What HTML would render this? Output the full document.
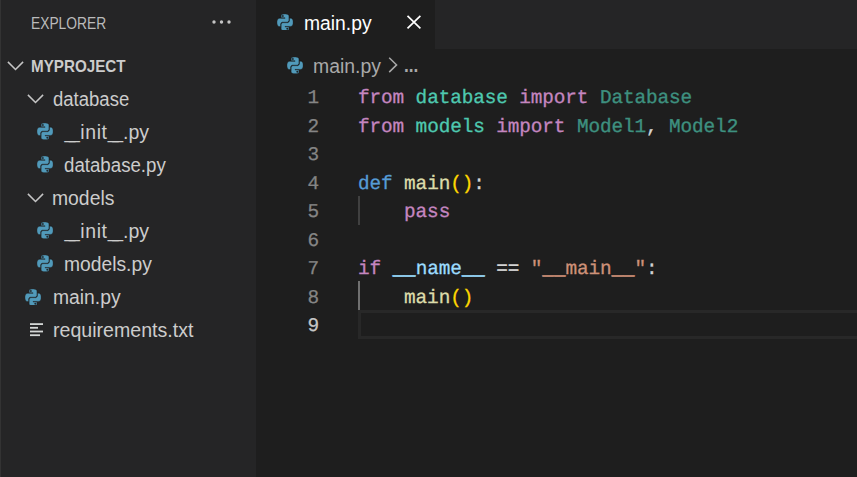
<!DOCTYPE html>
<html lang="en">
<head>
<meta charset="utf-8">
<title>main.py - myproject</title>
<style>
*{margin:0;padding:0;box-sizing:border-box}
html,body{width:857px;height:477px;overflow:hidden;background:#1e1e1e}
body{position:relative;font-family:"Liberation Sans",sans-serif;color:#cccccc}
.abs{position:absolute}
#side{left:0;top:0;width:256px;height:477px;background:#252526}
#edge{left:0;top:0;width:1px;height:477px;background:#333333}
#tabs{left:256px;top:0;width:601px;height:49px;background:#252526}
#tab{left:256px;top:0;width:179px;height:49px;background:#1e1e1e}
.t{position:absolute;height:33px;line-height:33px;white-space:nowrap;transform-origin:0 50%}
.u1{letter-spacing:-6.3px;position:relative;top:-1.2px}.u2{letter-spacing:-0.5px;position:relative;top:-1.2px}
.ln{position:absolute;left:255px;width:64px;text-align:right;height:28.5px;line-height:28.5px;font-family:"Liberation Mono",monospace;font-size:19.4px;letter-spacing:-0.12px;color:#858585;-webkit-text-stroke:0.25px;text-rendering:geometricPrecision}
.cl{position:absolute;left:358px;height:28.5px;line-height:28.5px;font-family:"Liberation Mono",monospace;font-size:19.4px;letter-spacing:-0.12px;color:#d4d4d4;white-space:pre;-webkit-text-stroke:0.3px;text-rendering:geometricPrecision}
.ub{text-shadow:0 0.8px 0 currentColor}.k{color:#c586c0}.d{color:#569cd6}.m{color:#4ec9b0}.u{color:#4ec9b0;opacity:.67}.f{color:#dcdcaa}.b{color:#ffd700}.v{color:#9cdcfe}.s{color:#ce9178}
</style>
</head>
<body>
<svg width="0" height="0" style="position:absolute">
<defs>
<symbol id="py" viewBox="0 0 24 24"><path fill="#519aba" stroke="#252526" stroke-width="0.6" d="M14.25.18l.9.2.73.26.59.3.45.32.34.34.25.34.16.33.1.3.04.26.02.2-.01.13V8.5l-.05.63-.13.55-.21.46-.26.38-.3.31-.33.25-.35.19-.35.14-.33.1-.3.07-.26.04-.21.02H8.77l-.69.05-.59.14-.5.22-.41.27-.33.32-.27.35-.2.36-.15.37-.1.35-.07.32-.04.27-.02.21v3.06H3.17l-.21-.03-.28-.07-.32-.12-.35-.18-.36-.26-.36-.36-.35-.46-.32-.59-.28-.73-.21-.88-.14-1.05-.05-1.23.06-1.22.16-1.04.24-.87.32-.71.36-.57.4-.44.42-.33.42-.24.4-.16.36-.1.32-.05.24-.01h.16l.06.01h8.16v-.83H6.18l-.01-2.75-.02-.37.05-.34.11-.31.17-.28.25-.26.31-.23.38-.2.44-.18.51-.15.58-.12.64-.1.71-.06.77-.04.84-.02 1.27.05zm-6.3 1.98l-.23.33-.08.41.08.41.23.34.33.22.41.09.41-.09.33-.22.23-.34.08-.41-.08-.41-.23-.33-.33-.22-.41-.09-.41.09zm13.09 3.95l.28.06.32.12.35.18.36.27.36.35.35.47.32.59.28.73.21.88.14 1.04.05 1.23-.06 1.23-.16 1.04-.24.86-.32.71-.36.57-.4.45-.42.33-.42.24-.4.16-.36.09-.32.05-.24.02-.16-.01h-8.22v.82h5.84l.01 2.76.02.36-.05.34-.11.31-.17.29-.25.25-.31.24-.38.2-.44.17-.51.15-.58.13-.64.09-.71.07-.77.04-.84.01-1.27-.04-1.07-.14-.9-.2-.73-.25-.59-.3-.45-.33-.34-.34-.25-.34-.16-.33-.1-.3-.04-.25-.02-.2.01-.13v-5.34l.05-.64.13-.54.21-.46.26-.38.3-.32.33-.24.35-.2.35-.14.33-.1.3-.06.26-.04.21-.02.13-.01h5.84l.69-.05.59-.14.5-.21.41-.28.33-.32.27-.35.2-.36.15-.36.1-.35.07-.32.04-.28.02-.21V6.07h2.09l.14.01zm-6.47 14.25l-.23.33-.08.41.08.41.23.33.33.23.41.08.41-.08.33-.23.23-.33.08-.41-.08-.41-.23-.33-.33-.23-.41-.08-.41.08z"/></symbol>
<symbol id="py2" viewBox="0 0 24 24"><path fill="#519aba" stroke="#1e1e1e" stroke-width="0.6" d="M14.25.18l.9.2.73.26.59.3.45.32.34.34.25.34.16.33.1.3.04.26.02.2-.01.13V8.5l-.05.63-.13.55-.21.46-.26.38-.3.31-.33.25-.35.19-.35.14-.33.1-.3.07-.26.04-.21.02H8.77l-.69.05-.59.14-.5.22-.41.27-.33.32-.27.35-.2.36-.15.37-.1.35-.07.32-.04.27-.02.21v3.06H3.17l-.21-.03-.28-.07-.32-.12-.35-.18-.36-.26-.36-.36-.35-.46-.32-.59-.28-.73-.21-.88-.14-1.05-.05-1.23.06-1.22.16-1.04.24-.87.32-.71.36-.57.4-.44.42-.33.42-.24.4-.16.36-.1.32-.05.24-.01h.16l.06.01h8.16v-.83H6.18l-.01-2.75-.02-.37.05-.34.11-.31.17-.28.25-.26.31-.23.38-.2.44-.18.51-.15.58-.12.64-.1.71-.06.77-.04.84-.02 1.27.05zm-6.3 1.98l-.23.33-.08.41.08.41.23.34.33.22.41.09.41-.09.33-.22.23-.34.08-.41-.08-.41-.23-.33-.33-.22-.41-.09-.41.09zm13.09 3.95l.28.06.32.12.35.18.36.27.36.35.35.47.32.59.28.73.21.88.14 1.04.05 1.23-.06 1.23-.16 1.04-.24.86-.32.71-.36.57-.4.45-.42.33-.42.24-.4.16-.36.09-.32.05-.24.02-.16-.01h-8.22v.82h5.84l.01 2.76.02.36-.05.34-.11.31-.17.29-.25.25-.31.24-.38.2-.44.17-.51.15-.58.13-.64.09-.71.07-.77.04-.84.01-1.27-.04-1.07-.14-.9-.2-.73-.25-.59-.3-.45-.33-.34-.34-.25-.34-.16-.33-.1-.3-.04-.25-.02-.2.01-.13v-5.34l.05-.64.13-.54.21-.46.26-.38.3-.32.33-.24.35-.2.35-.14.33-.1.3-.06.26-.04.21-.02.13-.01h5.84l.69-.05.59-.14.5-.21.41-.28.33-.32.27-.35.2-.36.15-.36.1-.35.07-.32.04-.28.02-.21V6.07h2.09l.14.01zm-6.47 14.25l-.23.33-.08.41.08.41.23.33.33.23.41.08.41-.08.33-.23.23-.33.08-.41-.08-.41-.23-.33-.33-.23-.41-.08-.41.08z"/></symbol>
</defs>
</svg>

<div id="side" class="abs"></div>
<div id="edge" class="abs"></div>
<div id="tabs" class="abs"></div>
<div id="tab" class="abs"></div>

<!-- sidebar title -->
<div class="t" id="explorer" style="left:30.9px;top:7px;font-size:16.5px;color:#bbbbbb;transform:scaleX(0.836);">EXPLORER</div>
<svg class="abs" style="left:211px;top:19px" width="22" height="6" viewBox="0 0 22 6"><circle cx="3" cy="3" r="1.7" fill="#c5c5c5"/><circle cx="10.5" cy="3" r="1.7" fill="#c5c5c5"/><circle cx="18" cy="3" r="1.7" fill="#c5c5c5"/></svg>

<!-- project header -->
<svg class="abs" style="left:7.2px;top:60.8px" width="17" height="10" viewBox="0 0 17 10"><path fill="none" stroke="#c5c5c5" stroke-width="1.5" d="M0.9 0.9 L8.5 8.5 L16.1 0.9"/></svg>
<div class="t" id="myproject" style="left:31.2px;top:50px;font-size:16.5px;color:#cccccc;font-weight:bold;transform:scaleX(0.921);">MYPROJECT</div>

<!-- tree -->
<svg class="abs" style="left:27.2px;top:94px" width="17" height="10" viewBox="0 0 17 10"><path fill="none" stroke="#c5c5c5" stroke-width="1.5" d="M0.9 0.9 L8.5 8.5 L16.1 0.9"/></svg>
<div class="t" id="database" style="left:53.2px;top:82.8px;font-size:19.5px;color:#cccccc;transform:scaleX(0.95);">database</div>
<svg class="abs" style="left:37.3px;top:123.3px" width="16.1" height="16.8" viewBox="0 0 24 24" preserveAspectRatio="none"><use href="#py"/></svg>
<div class="t" id="init1" style="left:64.4px;top:115.8px;font-size:19.5px;color:#cccccc;transform:scaleX(1);"><span class="u1">_</span><span class="u2">_</span><span style="letter-spacing:0.6px;margin-left:1px">init</span><span class="u1">_</span><span class="u2">_</span><span style="margin-left:0.5px">.py</span></div>
<svg class="abs" style="left:37.3px;top:156.3px" width="16.1" height="16.8" viewBox="0 0 24 24" preserveAspectRatio="none"><use href="#py"/></svg>
<div class="t" id="databasepy" style="left:64.3px;top:148.8px;font-size:19.5px;color:#cccccc;transform:scaleX(0.958);">database.py</div>
<svg class="abs" style="left:27.2px;top:193px" width="17" height="10" viewBox="0 0 17 10"><path fill="none" stroke="#c5c5c5" stroke-width="1.5" d="M0.9 0.9 L8.5 8.5 L16.1 0.9"/></svg>
<div class="t" id="models" style="left:52.3px;top:181.8px;font-size:19.5px;color:#cccccc;transform:scaleX(0.992);">models</div>
<svg class="abs" style="left:37.3px;top:222.3px" width="16.1" height="16.8" viewBox="0 0 24 24" preserveAspectRatio="none"><use href="#py"/></svg>
<div class="t" id="init2" style="left:64.4px;top:214.8px;font-size:19.5px;color:#cccccc;transform:scaleX(1);"><span class="u1">_</span><span class="u2">_</span><span style="letter-spacing:0.6px;margin-left:1px">init</span><span class="u1">_</span><span class="u2">_</span><span style="margin-left:0.5px">.py</span></div>
<svg class="abs" style="left:37.3px;top:255.3px" width="16.1" height="16.8" viewBox="0 0 24 24" preserveAspectRatio="none"><use href="#py"/></svg>
<div class="t" id="modelspy" style="left:64.3px;top:247.8px;font-size:19.5px;color:#cccccc;transform:scaleX(0.988);">models.py</div>
<svg class="abs" style="left:25.0px;top:288.5px" width="16.1" height="16.8" viewBox="0 0 24 24" preserveAspectRatio="none"><use href="#py"/></svg>
<div class="t" id="mainpy" style="left:52.6px;top:280.6px;font-size:19.5px;color:#cccccc;transform:scaleX(0.99);">main.py</div>
<svg class="abs" style="left:30px;top:323px" width="14" height="14" viewBox="0 0 14 14"><g fill="#d4d7d6"><rect x="0" y="0.2" width="13" height="1.8"/><rect x="0" y="3.9" width="8" height="1.8"/><rect x="0" y="7.6" width="13" height="1.8"/><rect x="0" y="11.3" width="10" height="1.8"/></g></svg>
<div class="t" id="req" style="left:52.6px;top:313.6px;font-size:19.5px;color:#cccccc;transform:scaleX(1.004);">requirements.txt</div>

<!-- tab -->
<svg class="abs" style="left:277.3px;top:13.6px" width="16.1" height="16.8" viewBox="0 0 24 24" preserveAspectRatio="none"><use href="#py2"/></svg>
<div class="t" id="tabmain" style="left:304.3px;top:7.1px;font-size:19.5px;color:#ffffff;transform:scaleX(0.99);">main.py</div>
<svg class="abs" style="left:404.6px;top:12.9px" width="18" height="18" viewBox="0 0 18 18"><path d="M2.5 2.8 L15.4 15.3 M15.4 2.8 L2.5 15.3" stroke="#ffffff" stroke-width="1.7" fill="none"/></svg>

<!-- breadcrumb -->
<svg class="abs" style="left:286.7px;top:57.4px" width="16.1" height="16.8" viewBox="0 0 24 24" preserveAspectRatio="none"><use href="#py2"/></svg>
<div class="t" id="bcmain" style="left:313.2px;top:49.7px;font-size:19.5px;color:#a9a9a9;transform:scaleX(0.995);">main.py</div>
<svg class="abs" style="left:384px;top:56px" width="18" height="18" viewBox="0 0 18 18"><path d="M5.2 1.7 L12.6 8.9 L5.2 16.1" stroke="#a9a9a9" stroke-width="1.5" fill="none"/></svg>
<div class="t" id="bcdots" style="left:404.2px;top:48.7px;font-size:19.5px;color:#a9a9a9;font-weight:bold;transform:scaleX(0.88);">...</div>

<!-- line numbers + code -->
<div class="abs" style="left:358px;top:195.75px;width:1.5px;height:29.25px;background:#404040"></div>
<div class="abs" style="left:358px;top:281.25px;width:1.5px;height:28.5px;background:#707070"></div>
<div class="abs" style="left:358px;top:310px;width:510px;height:28.5px;border:3px solid #282828"></div>
<div class="ln" style="top:83.6px;color:#858585">1</div>
<div class="ln" style="top:112.6px;color:#858585">2</div>
<div class="ln" style="top:140.6px;color:#858585">3</div>
<div class="ln" style="top:169.6px;color:#858585">4</div>
<div class="ln" style="top:197.6px;color:#858585">5</div>
<div class="ln" style="top:226.6px;color:#858585">6</div>
<div class="ln" style="top:254.6px;color:#858585">7</div>
<div class="ln" style="top:283.6px;color:#858585">8</div>
<div class="ln" style="top:311.6px;color:#c6c6c6">9</div>
<div class="cl" style="top:83.6px"><span class="k">from</span> <span class="m">database</span> <span class="k">import</span> <span class="u">Database</span></div>
<div class="cl" style="top:112.6px"><span class="k">from</span> <span class="m">models</span> <span class="k">import</span> <span class="u">Model1</span>, <span class="u">Model2</span></div>
<div class="cl" style="top:169.6px"><span class="d">def</span> <span class="f">main</span><span class="b">()</span>:</div>
<div class="cl" style="top:197.6px">    <span class="k">pass</span></div>
<div class="cl" style="top:254.6px"><span class="k">if</span> <span class="v"><span class="ub">__</span>name<span class="ub">__</span></span> == <span class="s">"<span class="ub">__</span>main<span class="ub">__</span>"</span>:</div>
<div class="cl" style="top:283.6px">    <span class="f">main</span><span class="b">()</span></div>
</body>
</html>
